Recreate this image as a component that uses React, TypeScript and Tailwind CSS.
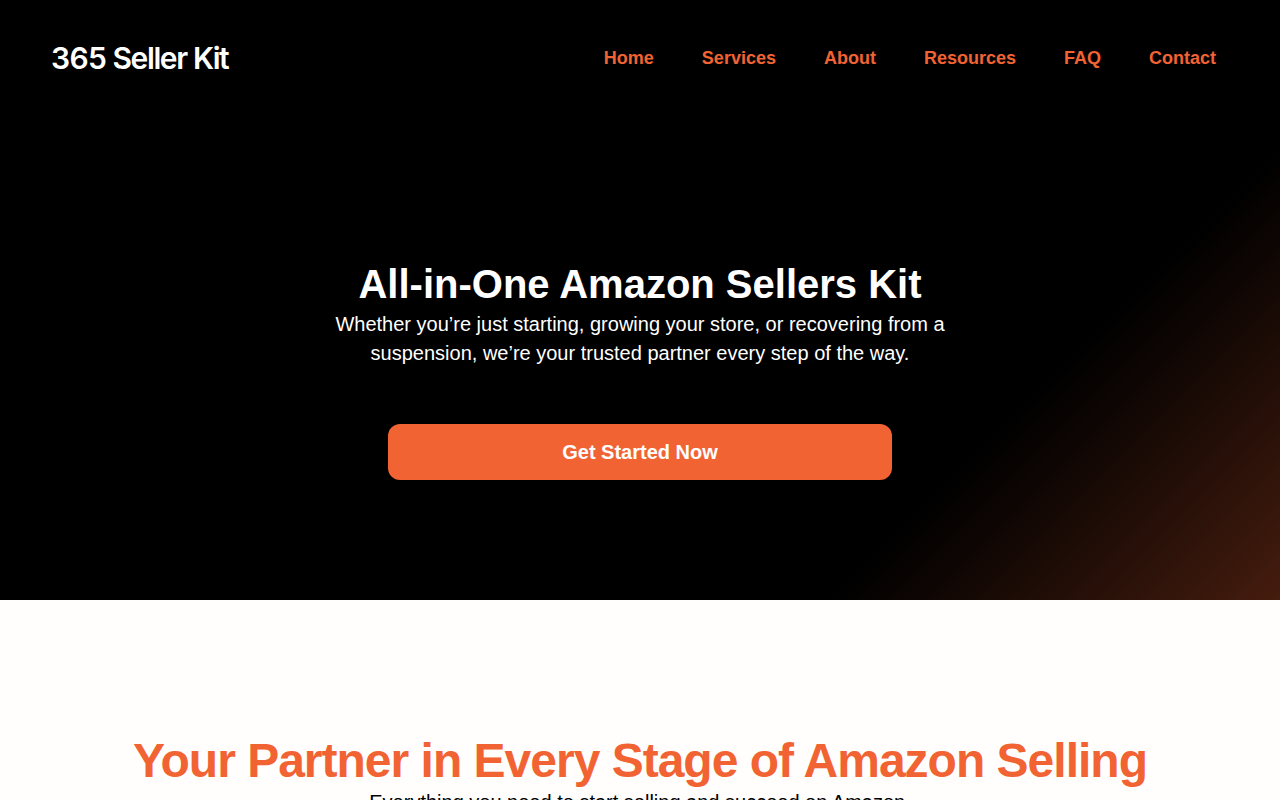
import React from 'react';

const navLinks = ['Home', 'Services', 'About', 'Resources', 'FAQ', 'Contact'];

export default function App() {
  return (
    <div className="h-[800px] overflow-hidden bg-[#fffefc] font-['Liberation_Sans',Arial,sans-serif]">
      <section className="flex h-[600px] flex-col bg-[linear-gradient(135deg,#000_76%,#451c0e_100%)]">
        <header className="flex h-[116px] items-center justify-between pl-[51px] pr-[64px]">
          <a className="font-['Inter',sans-serif] text-[30px] font-semibold tracking-[-1.4px] text-white">
            <span className="tracking-[-0.6px]">365</span> Seller <span className="tracking-[-1.6px]">Kit</span>
          </a>
          <nav className="flex gap-12">
            {navLinks.map((link) => (
              <a key={link} className="text-lg font-bold text-[#f26333]">
                {link}
              </a>
            ))}
          </nav>
        </header>

        <div className="flex flex-col items-center pt-[144px] text-center">
          <h1 className="text-[40px] leading-[48px] font-bold text-white">All-in-One Amazon Sellers Kit</h1>
          <p className="mt-[2px] w-[640px] text-xl leading-[29px] text-white">
            Whether you’re just starting, growing your store, or recovering from a suspension, we’re your trusted partner every step of the way.
          </p>
          <button className="mt-[56px] h-14 w-[504px] rounded-xl bg-[#f26333] text-xl font-bold text-white">
            Get Started Now
          </button>
        </div>
      </section>

      <section className="flex flex-col items-center pt-[134px] text-center">
        <h2 className="text-[48px] leading-[54px] font-bold tracking-[-1px] text-[#f26333]">Your Partner in Every Stage of Amazon Selling</h2>
        <p className="text-xl leading-[29px] text-black">Everything you need to start selling and succeed on Amazon.</p>
      </section>
    </div>
  );
}
